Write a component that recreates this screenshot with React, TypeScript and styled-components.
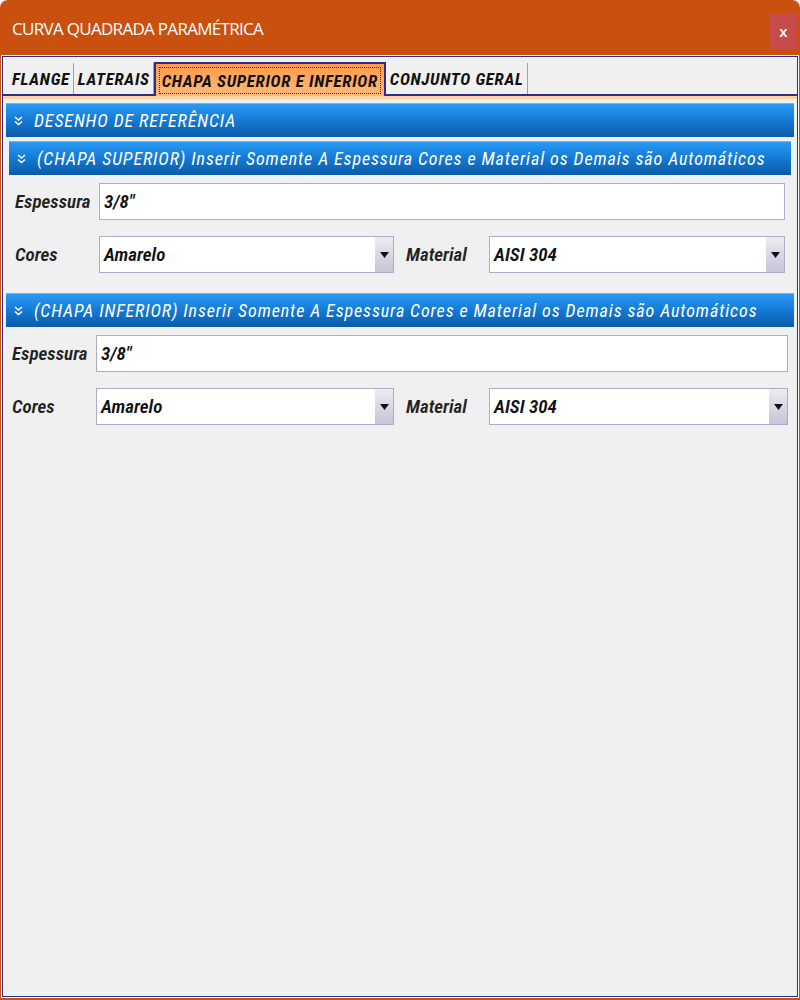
import React from 'react';
import styled, { createGlobalStyle } from 'styled-components';

const GlobalStyle = createGlobalStyle`
  html, body {
    margin: 0;
    padding: 0;
    background: #ffffff;
  }
  * { box-sizing: border-box; }
`;

const FORM_FONT = `"Roboto Condensed", "Open Sans", "Noto Sans", sans-serif`;

const Window = styled.div`
  width: 800px;
  height: 1000px;
  display: flex;
  flex-direction: column;
  background: #c9500f;
  border-radius: 8px 8px 0 0;
  overflow: hidden;
`;

const TitleBar = styled.div`
  height: 55px;
  flex-shrink: 0;
  display: flex;
  align-items: center;
  justify-content: space-between;
  padding: 0 3px 0 12px;
`;

const Title = styled.span`
  color: #fff;
  font-family: "Open Sans", "Noto Sans", sans-serif;
  font-size: 17px;
  letter-spacing: -0.7px;
  margin-top: 2px;
`;

const CloseButton = styled.button`
  width: 27px;
  height: 36px;
  margin-top: 7px;
  border: none;
  background: #c84b4b;
  color: #fff;
  font-family: "Open Sans", sans-serif;
  font-size: 15px;
  font-weight: 600;
  padding: 0;
`;

const Frame = styled.div`
  flex: 1;
  min-height: 0;
  margin: 0 1px 2px 1px;
  padding: 1px;
  background: #ffffff;
  display: flex;
`;

const Inner = styled.div`
  flex: 1;
  min-width: 0;
  display: flex;
  flex-direction: column;
  border: 1px solid #2e2e8a;
  background: #f0f0f0;
`;

const TabStrip = styled.div`
  height: 39px;
  flex-shrink: 0;
  display: flex;
  align-items: flex-end;
  padding-left: 5px;
  border-bottom: 2px solid #2e2e8a;
`;

const Tab = styled.div<{ $active?: boolean }>`
  height: ${({ $active }) => ($active ? '35px' : '31px')};
  margin-bottom: ${({ $active }) => ($active ? '-3px' : '0')};
  display: flex;
  align-items: center;
  padding: ${({ $active }) => ($active ? '3px' : '0 3px 0 4px')};
  font-family: ${FORM_FONT};
  font-style: italic;
  font-weight: bold;
  font-size: 17px;
  font-stretch: 75%;
  letter-spacing: 0.7px;
  color: #111;
  border-right: ${({ $active }) => ($active ? '2px solid #2e2e8a' : '1px solid #a0a0a0')};
  border-left: ${({ $active }) => ($active ? '2px solid #2e2e8a' : 'none')};
  border-top: ${({ $active }) => ($active ? '2px solid #2e2e8a' : 'none')};
  background: ${({ $active }) =>
    $active ? 'linear-gradient(#ff9a4a, #ffbb7a)' : 'transparent'};
`;

const FocusBox = styled.span`
  height: 100%;
  display: flex;
  align-items: center;
  padding: 0 2px;
  border: 1px dotted #333;
`;

const PeachLine = styled.div`
  height: 3px;
  flex-shrink: 0;
  background: #ffd3a0;
`;

const Content = styled.div`
  flex: 1;
  display: flex;
  flex-direction: column;
  padding: 4px 3px 0 3px;
`;

const Header = styled.div<{ $inset?: number }>`
  height: 34px;
  min-width: 0;
  overflow: hidden;
  margin: 0 ${({ $inset }) => $inset ?? 0}px;
  display: flex;
  align-items: center;
  gap: 11px;
  padding-left: 8px;
  background: linear-gradient(#2a9af5 0%, #1479d4 50%, #0b5ba8 100%);
  border-top: 1px solid #63b8ff;
  color: #fff;
  font-family: ${FORM_FONT};
  font-style: italic;
  font-size: 18px;
  font-stretch: 75%;
  letter-spacing: 0.88px;
  white-space: nowrap;
`;

const Chevron = styled.svg`
  width: 9px;
  height: 10px;
  flex-shrink: 0;
`;

const Section = styled.div<{ $pad: number }>`
  display: flex;
  flex-direction: column;
  gap: 16px;
  padding: 8px ${({ $pad }) => $pad}px 0 ${({ $pad }) => $pad}px;
  margin-bottom: 20px;
`;

const Row = styled.div`
  display: flex;
  align-items: center;
  min-width: 0;
`;

const Label = styled.span<{ $width: number; $indent?: number }>`
  width: ${({ $width }) => $width}px;
  padding-left: ${({ $indent }) => $indent ?? 0}px;
  flex-shrink: 0;
  font-family: ${FORM_FONT};
  font-style: italic;
  font-weight: 600;
  font-size: 19px;
  font-stretch: 75%;
  color: #222;
  white-space: nowrap;
`;

const Field = styled.div<{ $width?: number }>`
  flex: ${({ $width }) => ($width ? 'none' : '1')};
  width: ${({ $width }) => ($width ? `${$width}px` : 'auto')};
  min-width: 0;
  height: 37px;
  display: flex;
  align-items: center;
  background: #fff;
  border: 1px solid #aeaac8;
  font-family: ${FORM_FONT};
  font-style: italic;
  font-weight: 600;
  font-size: 19px;
  font-stretch: 75%;
  color: #111;
`;

const FieldText = styled.span`
  flex: 1;
  padding-left: 4px;
`;

const DropButton = styled.div`
  width: 18px;
  height: 100%;
  display: flex;
  align-items: center;
  justify-content: center;
  background: linear-gradient(#ececf2, #c6c4d6);
`;

const ChevronIcon = () => (
  <Chevron viewBox="0 0 9 10">
    <path d="M1 1 L4.5 4 L8 1 M1 5.5 L4.5 8.5 L8 5.5" stroke="#fff" strokeWidth="1.6" fill="none" />
  </Chevron>
);

const Select = ({ value, width }: { value: string; width?: number }) => (
  <Field $width={width}>
    <FieldText>{value}</FieldText>
    <DropButton>
      <svg width="9" height="6" viewBox="0 0 9 6">
        <path d="M0 0 H9 L4.5 6 Z" fill="#111" />
      </svg>
    </DropButton>
  </Field>
);

const LABEL_W = 84;

const Plate = ({ pad }: { pad: number }) => (
  <Section $pad={pad}>
    <Row>
      <Label $width={LABEL_W}>Espessura</Label>
      <Field>
        <FieldText>3/8"</FieldText>
      </Field>
    </Row>
    <Row>
      <Label $width={LABEL_W}>Cores</Label>
      <Select value="Amarelo" width={394 - (pad + 6 + LABEL_W)} />
      <Label $width={95} $indent={12}>Material</Label>
      <Select value="AISI 304" />
    </Row>
  </Section>
);

export default function App() {
  return (
    <>
      <GlobalStyle />
      <Window>
        <TitleBar>
          <Title>CURVA QUADRADA PARAMÉTRICA</Title>
          <CloseButton>x</CloseButton>
        </TitleBar>
        <Frame>
          <Inner>
            <TabStrip>
              <Tab>FLANGE</Tab>
              <Tab>LATERAIS</Tab>
              <Tab $active>
                <FocusBox>CHAPA SUPERIOR E INFERIOR</FocusBox>
              </Tab>
              <Tab>CONJUNTO GERAL</Tab>
            </TabStrip>
            <PeachLine />
            <Content>
              <Header>
                <ChevronIcon />
                DESENHO DE REFERÊNCIA
              </Header>
              <Header $inset={3} style={{ marginTop: 4 }}>
                <ChevronIcon />
                (CHAPA SUPERIOR) Inserir Somente A Espessura Cores e Material os Demais são Automáticos
              </Header>
              <Plate pad={9} />
              <Header>
                <ChevronIcon />
                (CHAPA INFERIOR) Inserir Somente A Espessura Cores e Material os Demais são Automáticos
              </Header>
              <Plate pad={6} />
            </Content>
          </Inner>
        </Frame>
      </Window>
    </>
  );
}
